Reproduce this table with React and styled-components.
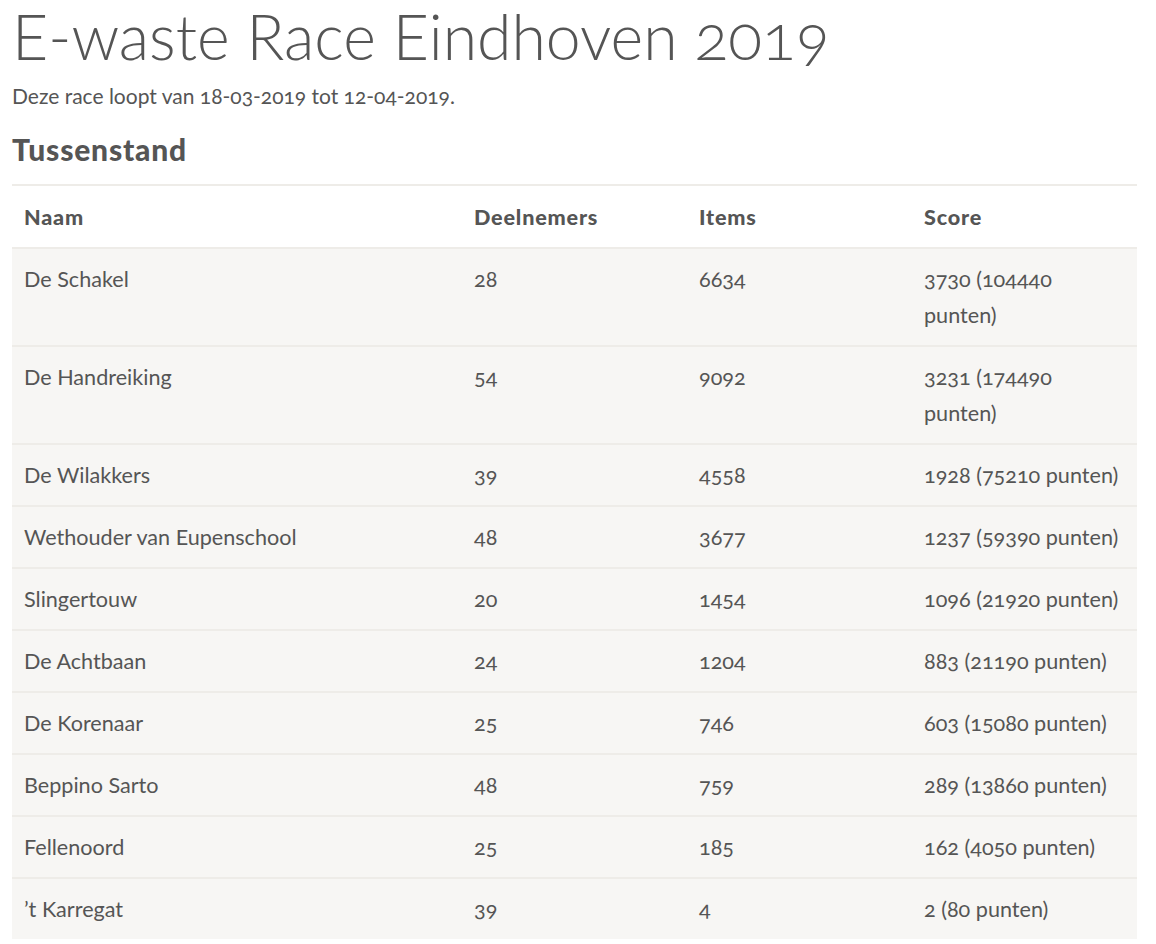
import styled, { createGlobalStyle } from "styled-components";

const GlobalStyle = createGlobalStyle`
  body {
    margin: 0;
    background: #fff;
    color: #555;
    font-family: Lato, "Open Sans", sans-serif;
    font-variant-numeric: oldstyle-nums;
  }
`;

const rows = [
  ["De Schakel", 28, 6634, "3730 (104440 punten)"],
  ["De Handreiking", 54, 9092, "3231 (174490 punten)"],
  ["De Wilakkers", 39, 4558, "1928 (75210 punten)"],
  ["Wethouder van Eupenschool", 48, 3677, "1237 (59390 punten)"],
  ["Slingertouw", 20, 1454, "1096 (21920 punten)"],
  ["De Achtbaan", 24, 1204, "883 (21190 punten)"],
  ["De Korenaar", 25, 746, "603 (15080 punten)"],
  ["Beppino Sarto", 48, 759, "289 (13860 punten)"],
  ["Fellenoord", 25, 185, "162 (4050 punten)"],
  ["\u2019t Karregat", 39, 4, "2 (80 punten)"],
];

export default function App() {
  return (
    <>
      <GlobalStyle />
      <Page>
        <Title>E-waste Race Eindhoven 2019</Title>
        <Intro>Deze race loopt van 18-03-2019 tot 12-04-2019.</Intro>
        <SubTitle>Tussenstand</SubTitle>
        <Table>
          <colgroup>
            <col style={{ width: "40%" }} />
            <col style={{ width: "20%" }} />
            <col style={{ width: "20%" }} />
            <col style={{ width: "20%" }} />
          </colgroup>
          <thead>
            <tr>
              <Th>Naam</Th>
              <Th>Deelnemers</Th>
              <Th>Items</Th>
              <Th>Score</Th>
            </tr>
          </thead>
          <tbody>
            {rows.map((r) => (
              <Row key={r[0]}>
                <Td>{r[0]}</Td>
                <Td>{r[1]}</Td>
                <Td>{r[2]}</Td>
                <Td>{r[3]}</Td>
              </Row>
            ))}
          </tbody>
        </Table>
      </Page>
    </>
  );
}

const Page = styled.div`
  width: 1125px;
  padding-left: 12px;
`;

const Title = styled.h1`
  margin: 0;
  font-size: 62.5px;
  font-weight: 300;
  line-height: 72px;
  color: #555;
`;

const Intro = styled.p`
  margin: 9px 0 0;
  font-size: 21px;
  line-height: 30px;
`;

const SubTitle = styled.h2`
  margin: 21px 0 18px;
  font-size: 30px;
  font-weight: 900;
  letter-spacing: 0.8px;
  line-height: 34px;
  color: #555;
`;

const Table = styled.table`
  width: 100%;
  border-collapse: collapse;
  table-layout: fixed;
  border-top: 2px solid #eeece8;
`;

const Th = styled.th`
  text-align: left;
  padding: 13px 12px 12px;
  font-size: 21.6px;
  font-weight: 900;
  letter-spacing: 0.8px;
  line-height: 36px;
  color: #555;
  border-bottom: 2px solid #eeece8;
`;

const Row = styled.tr`
  background: #f7f6f4;
  border-bottom: 2px solid #eeece8;

  &:last-child {
    border-bottom: none;
  }
`;

const Td = styled.td`
  padding: 12px;
  vertical-align: top;
  font-size: 21.6px;
  line-height: 36px;
  color: #555;
`;
